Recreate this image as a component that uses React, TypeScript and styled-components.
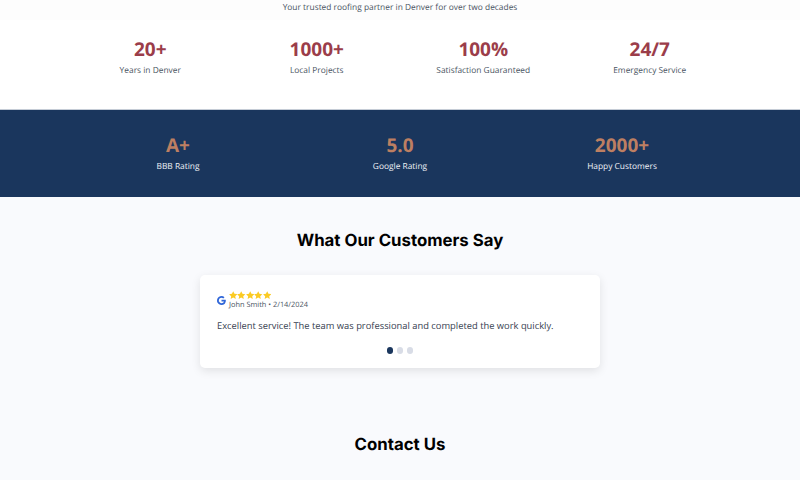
import React from 'react';
import styled, { createGlobalStyle } from 'styled-components';

const STATS = [
	{ value: '20+', label: 'Years in Denver' },
	{ value: '1000+', label: 'Local Projects' },
	{ value: '100%', label: 'Satisfaction Guaranteed' },
	{ value: '24/7', label: 'Emergency Service' },
];

const RATINGS = [
	{ value: 'A+', label: 'BBB Rating' },
	{ value: '5.0', label: 'Google Rating' },
	{ value: '2000+', label: 'Happy Customers' },
];

const GoogleIcon = () => (
	<svg width="9" height="9" viewBox="0 0 24 24">
		<path
			fill="#2f66d8"
			d="M23.5 12.300c0-.9-.1-1.700-.2-2.500H12v4.700h6.500c-.3 1.500-1.100 2.800-2.400 3.600v3h3.900c2.300-2.100 3.500-5.200 3.500-8.800z"
		/>
		<path
			fill="#2f66d8"
			d="M12 24c3.200 0 6-1.100 8-2.900l-3.900-3c-1.100.7-2.500 1.200-4.100 1.200-3.100 0-5.800-2.100-6.700-5H1.300v3.100C3.300 21.300 7.300 24 12 24z"
		/>
		<path fill="#2f66d8" d="M5.300 14.300c-.5-1.500-.5-3.100 0-4.600V6.600H1.300c-1.700 3.400-1.700 7.400 0 10.800l4-3.100z" />
		<path
			fill="#2f66d8"
			d="M12 4.800c1.800 0 3.300.6 4.600 1.800l3.400-3.400C17.900 1.200 15.200 0 12 0 7.300 0 3.300 2.700 1.300 6.600l4 3.100c.9-2.800 3.600-4.900 6.700-4.900z"
		/>
	</svg>
);

const Star = () => (
	<svg width="8.4" height="8.4" viewBox="0 0 24 24">
		<path fill="#fbcb24" d="M12 .5l3.600 7.400 8.200 1.100-6 5.700 1.500 8.100L12 18.900l-7.300 3.900 1.500-8.100-6-5.700 8.200-1.100z" />
	</svg>
);

const App = () => (
	<Page>
		<GlobalStyle />
		<Intro>Your trusted roofing partner in Denver for over two decades</Intro>
		<StatsSection>
			<StatsGrid>
				{STATS.map(({ value, label }) => (
					<Stat key={label}>
						<StatValue>{value}</StatValue>
						<StatLabel>{label}</StatLabel>
					</Stat>
				))}
			</StatsGrid>
		</StatsSection>
		<RatingsSection>
			<RatingsGrid>
				{RATINGS.map(({ value, label }) => (
					<Stat key={label}>
						<RatingValue>{value}</RatingValue>
						<RatingLabel>{label}</RatingLabel>
					</Stat>
				))}
			</RatingsGrid>
		</RatingsSection>
		<ReviewsSection>
			<Heading>What Our Customers Say</Heading>
			<ReviewCard>
				<ReviewHeader>
					<GoogleIcon />
					<div>
						<Stars>
							<Star />
							<Star />
							<Star />
							<Star />
							<Star />
						</Stars>
						<Reviewer>John Smith • 2/14/2024</Reviewer>
					</div>
				</ReviewHeader>
				<ReviewText>Excellent service! The team was professional and completed the work quickly.</ReviewText>
				<Dots>
					<Dot $active />
					<Dot />
					<Dot />
				</Dots>
			</ReviewCard>
		</ReviewsSection>
		<ContactSection>
			<Heading>Contact Us</Heading>
		</ContactSection>
	</Page>
);

const GlobalStyle = createGlobalStyle`
	html, body {
		margin: 0;
		padding: 0;
		height: 480px;
		overflow: hidden;
		background: #f9fafd;
		text-rendering: geometricPrecision;
	}
`;

const Page = styled.div`
	width: 800px;
	height: 480px;
	overflow: hidden;
	background: #f9fafd;
	font-family: 'Open Sans', sans-serif;
`;

const Intro = styled.p`
	margin: 0;
	height: 20px;
	padding-top: 0.5px;
	box-sizing: border-box;
	font-size: 8.4px;
	line-height: 14px;
	color: #4b5563;
	text-align: center;
	background: #fdfdfd;
`;

const StatsSection = styled.section`
	height: 90px;
	box-sizing: border-box;
	padding-top: 17px;
	background: #fff;
	border-bottom: 1px solid #c5ccd6;
`;

const StatsGrid = styled.div`
	display: grid;
	grid-template-columns: repeat(4, 1fr);
	padding: 0 67px;
`;

const Stat = styled.div`
	display: flex;
	flex-direction: column;
	align-items: center;
`;

const StatValue = styled.div`
	font-size: 19px;
	line-height: 24px;
	font-weight: 700;
	color: #9b3d4a;
`;

const StatLabel = styled.div`
	margin-top: 3px;
	font-size: 8.4px;
	line-height: 14px;
	color: #4b5563;
`;

const RatingsSection = styled.section`
	height: 87px;
	box-sizing: border-box;
	padding-top: 23px;
	background: #1a365d;
`;

const RatingsGrid = styled.div`
	display: grid;
	grid-template-columns: repeat(3, 1fr);
	padding: 0 67px;
`;

const RatingValue = styled.div`
	font-size: 19px;
	line-height: 24px;
	font-weight: 700;
	color: #bd7f62;
`;

const RatingLabel = styled.div`
	margin-top: 3px;
	font-size: 8.4px;
	line-height: 14px;
	color: #eef1f6;
`;

const ReviewsSection = styled.section`
	display: flex;
	flex-direction: column;
	align-items: center;
	padding-top: 33px;
`;

const Heading = styled.h2`
	margin: 0;
	font-family: Inter, sans-serif;
	font-size: 16.8px;
	line-height: 22px;
	font-weight: 700;
	color: #000;
`;

const ReviewCard = styled.div`
	width: 400px;
	height: 93px;
	box-sizing: border-box;
	margin-top: 23px;
	padding: 16px 17px 0;
	background: #fff;
	border-radius: 5px;
	box-shadow: 0 3px 10px rgba(0, 0, 0, 0.1);
`;

const ReviewHeader = styled.div`
	display: flex;
	align-items: center;
	gap: 3px;
`;

const Stars = styled.div`
	display: flex;
	height: 9px;
`;

const Reviewer = styled.div`
	font-size: 7.4px;
	line-height: 10px;
	color: #4b5563;
`;

const ReviewText = styled.p`
	margin: 8px 0 0;
	font-size: 9.35px;
	line-height: 16px;
	white-space: nowrap;
	color: #374151;
`;

const Dots = styled.div`
	display: flex;
	justify-content: center;
	gap: 3.5px;
	margin-top: 13px;
`;

const Dot = styled.span<{ $active?: boolean }>`
	width: 6.5px;
	height: 6.5px;
	border-radius: 50%;
	background: ${props => (props.$active ? '#1a365d' : '#d8dce6')};
`;

const ContactSection = styled.section`
	display: flex;
	justify-content: center;
	padding-top: 66px;
`;

export default App;
